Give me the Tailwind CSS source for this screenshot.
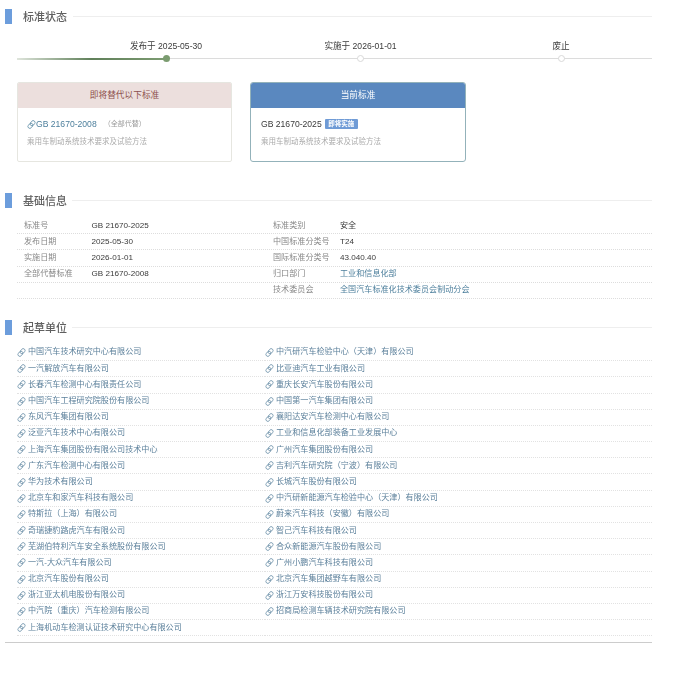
<!DOCTYPE html>
<html lang="zh">
<head>
<meta charset="utf-8">
<script src="https://cdn.jsdelivr.net/npm/@tailwindcss/browser@4"></script>
</head>
<body class="bg-white font-['Liberation_Sans','Noto_Sans_CJK_SC',sans-serif] text-[8.1px] text-[#3a3a3a]">
<svg class="hidden"><symbol id="l" viewBox="0 0 24 24" fill="none" stroke="currentColor" stroke-width="2"><g transform="rotate(-50 12 12)"><rect x="0" y="7" width="15" height="10" rx="5"/><rect x="9" y="7" width="15" height="10" rx="5"/></g></symbol></svg>
<main class="w-[647px] ml-[5px] pt-[9px] blur-[0.45px]">
  <section>
    <div class="flex items-center h-[15px]"><span class="w-[7px] h-[15px] bg-[#6c9ddc]"></span><h2 class="ml-[11px] pt-[2px] text-[11px] leading-[15px] font-medium text-[#606060]">标准状态</h2><span class="flex-1 ml-[6px] h-px bg-[#eeeeee]"></span></div>
    <div class="relative mt-[16px] ml-[12px] h-[39px] flex">
      <span class="absolute left-0 right-0 top-[18px] h-px bg-[#dcdcdc]"></span>
      <span class="absolute left-0 w-[149px] top-[18px] h-[1.5px] bg-gradient-to-r from-[#dfe5dc] via-[#60805a] to-[#7d9c72]"></span>
      <div class="relative w-[100px] ml-[99px] flex flex-col items-center"><span class="text-[8.6px] leading-[12px] whitespace-nowrap">发布于 2025-05-30</span><span class="mt-[3px] w-[7px] h-[7px] rounded-full bg-[#7b9c70]"></span></div>
      <div class="relative w-[100px] ml-[94.5px] flex flex-col items-center"><span class="text-[8.6px] leading-[12px] whitespace-nowrap">实施于 2026-01-01</span><span class="mt-[3px] w-[7px] h-[7px] rounded-full bg-white border border-[#d8d8d8]"></span></div>
      <div class="relative w-[100px] ml-[100.5px] flex flex-col items-center"><span class="text-[8.6px] leading-[12px] whitespace-nowrap">废止</span><span class="mt-[3px] w-[7px] h-[7px] rounded-full bg-white border border-[#d8d8d8]"></span></div>
    </div>
    <div class="flex ml-[12px] mt-[3px] gap-[18px]">
      <div class="w-[215px] h-[80px] rounded-[2px] border border-[#e6e6e0] overflow-hidden">
        <div class="h-[25px] bg-[#ecdfdd] text-[#8c4f4c] text-[8.7px] flex items-center justify-center">即将替代以下标准</div>
        <div class="pl-[9px] pt-[10px]">
          <div class="flex items-center h-[12px]"><svg class="w-[9px] h-[9px] text-[#5b8ba5]"><use href="#l"/></svg><span class="text-[8.6px] text-[#4d7f9c]">GB 21670-2008</span><span class="ml-[7px] text-[7px] text-[#999]">（全部代替）</span></div>
          <p class="mt-[6px] text-[7.5px] leading-[11px] text-[#aaa]">乘用车制动系统技术要求及试验方法</p>
        </div>
      </div>
      <div class="w-[216px] h-[80px] rounded-[3px] border border-[#93b2ba] overflow-hidden">
        <div class="h-[25px] bg-[#5a88bf] text-white text-[8.7px] flex items-center justify-center">当前标准</div>
        <div class="pl-[10px] pt-[10px]">
          <div class="flex items-center h-[12px]"><span class="text-[8.6px] text-[#3a3a3a]">GB 21670-2025</span><span class="ml-[3px] w-[33px] h-[10px] rounded-[1px] bg-[#6f9bd6] text-white text-[6.5px] font-bold flex items-center justify-center">即将实施</span></div>
          <p class="mt-[6px] text-[7.5px] leading-[11px] text-[#aaa]">乘用车制动系统技术要求及试验方法</p>
        </div>
      </div>
    </div>
  </section>

  <section class="mt-[31px]">
    <div class="flex items-center h-[15px]"><span class="w-[7px] h-[15px] bg-[#6c9ddc]"></span><h2 class="ml-[11px] pt-[2px] text-[11px] leading-[15px] font-medium text-[#606060]">基础信息</h2><span class="flex-1 ml-[5px] h-px bg-[#eeeeee]"></span></div>
    <div class="mt-[10px] ml-[12px]">
      <div class="h-[16.2px] flex items-center border-b border-dotted border-[#dddddd]"><span class="w-[7px]"></span><span class="w-[67.5px] text-[#888]">标准号</span><span class="w-[181.5px]">GB 21670-2025</span><span class="w-[67px] text-[#888]">标准类别</span><span>安全</span></div>
      <div class="h-[16.2px] flex items-center border-b border-dotted border-[#dddddd]"><span class="w-[7px]"></span><span class="w-[67.5px] text-[#888]">发布日期</span><span class="w-[181.5px]">2025-05-30</span><span class="w-[67px] text-[#888]">中国标准分类号</span><span>T24</span></div>
      <div class="h-[16.2px] flex items-center border-b border-dotted border-[#dddddd]"><span class="w-[7px]"></span><span class="w-[67.5px] text-[#888]">实施日期</span><span class="w-[181.5px]">2026-01-01</span><span class="w-[67px] text-[#888]">国际标准分类号</span><span>43.040.40</span></div>
      <div class="h-[16.2px] flex items-center border-b border-dotted border-[#dddddd]"><span class="w-[7px]"></span><span class="w-[67.5px] text-[#888]">全部代替标准</span><span class="w-[181.5px]">GB 21670-2008</span><span class="w-[67px] text-[#888]">归口部门</span><span class="text-[#4d7f9c]">工业和信息化部</span></div>
      <div class="h-[16.2px] flex items-center border-b border-dotted border-[#dddddd]"><span class="w-[7px]"></span><span class="w-[67.5px]"></span><span class="w-[181.5px]"></span><span class="w-[67px] text-[#888]">技术委员会</span><span class="text-[#4d7f9c]">全国汽车标准化技术委员会制动分会</span></div>
    </div>
  </section>

  <section class="mt-[21px]">
    <div class="flex items-center h-[15px]"><span class="w-[7px] h-[15px] bg-[#6c9ddc]"></span><h2 class="ml-[11px] pt-[2px] text-[11px] leading-[15px] font-medium text-[#606060]">起草单位</h2><span class="flex-1 ml-[5px] h-px bg-[#eeeeee]"></span></div>
    <ul class="mt-[10px] ml-[12px] grid grid-cols-[248px_1fr] text-[#5a7f9a]">
      <li class="h-[16.2px] flex items-center border-b border-dotted border-[#e2e2e2]"><svg class="w-[9px] h-[9px] shrink-0 text-[#6a8fa8]"><use href="#l"/></svg><span class="ml-[2px]">中国汽车技术研究中心有限公司</span></li>
      <li class="h-[16.2px] flex items-center border-b border-dotted border-[#e2e2e2]"><svg class="w-[9px] h-[9px] shrink-0 text-[#6a8fa8]"><use href="#l"/></svg><span class="ml-[2px]">中汽研汽车检验中心（天津）有限公司</span></li>
      <li class="h-[16.2px] flex items-center border-b border-dotted border-[#e2e2e2]"><svg class="w-[9px] h-[9px] shrink-0 text-[#6a8fa8]"><use href="#l"/></svg><span class="ml-[2px]">一汽解放汽车有限公司</span></li>
      <li class="h-[16.2px] flex items-center border-b border-dotted border-[#e2e2e2]"><svg class="w-[9px] h-[9px] shrink-0 text-[#6a8fa8]"><use href="#l"/></svg><span class="ml-[2px]">比亚迪汽车工业有限公司</span></li>
      <li class="h-[16.2px] flex items-center border-b border-dotted border-[#e2e2e2]"><svg class="w-[9px] h-[9px] shrink-0 text-[#6a8fa8]"><use href="#l"/></svg><span class="ml-[2px]">长春汽车检测中心有限责任公司</span></li>
      <li class="h-[16.2px] flex items-center border-b border-dotted border-[#e2e2e2]"><svg class="w-[9px] h-[9px] shrink-0 text-[#6a8fa8]"><use href="#l"/></svg><span class="ml-[2px]">重庆长安汽车股份有限公司</span></li>
      <li class="h-[16.2px] flex items-center border-b border-dotted border-[#e2e2e2]"><svg class="w-[9px] h-[9px] shrink-0 text-[#6a8fa8]"><use href="#l"/></svg><span class="ml-[2px]">中国汽车工程研究院股份有限公司</span></li>
      <li class="h-[16.2px] flex items-center border-b border-dotted border-[#e2e2e2]"><svg class="w-[9px] h-[9px] shrink-0 text-[#6a8fa8]"><use href="#l"/></svg><span class="ml-[2px]">中国第一汽车集团有限公司</span></li>
      <li class="h-[16.2px] flex items-center border-b border-dotted border-[#e2e2e2]"><svg class="w-[9px] h-[9px] shrink-0 text-[#6a8fa8]"><use href="#l"/></svg><span class="ml-[2px]">东风汽车集团有限公司</span></li>
      <li class="h-[16.2px] flex items-center border-b border-dotted border-[#e2e2e2]"><svg class="w-[9px] h-[9px] shrink-0 text-[#6a8fa8]"><use href="#l"/></svg><span class="ml-[2px]">襄阳达安汽车检测中心有限公司</span></li>
      <li class="h-[16.2px] flex items-center border-b border-dotted border-[#e2e2e2]"><svg class="w-[9px] h-[9px] shrink-0 text-[#6a8fa8]"><use href="#l"/></svg><span class="ml-[2px]">泛亚汽车技术中心有限公司</span></li>
      <li class="h-[16.2px] flex items-center border-b border-dotted border-[#e2e2e2]"><svg class="w-[9px] h-[9px] shrink-0 text-[#6a8fa8]"><use href="#l"/></svg><span class="ml-[2px]">工业和信息化部装备工业发展中心</span></li>
      <li class="h-[16.2px] flex items-center border-b border-dotted border-[#e2e2e2]"><svg class="w-[9px] h-[9px] shrink-0 text-[#6a8fa8]"><use href="#l"/></svg><span class="ml-[2px]">上海汽车集团股份有限公司技术中心</span></li>
      <li class="h-[16.2px] flex items-center border-b border-dotted border-[#e2e2e2]"><svg class="w-[9px] h-[9px] shrink-0 text-[#6a8fa8]"><use href="#l"/></svg><span class="ml-[2px]">广州汽车集团股份有限公司</span></li>
      <li class="h-[16.2px] flex items-center border-b border-dotted border-[#e2e2e2]"><svg class="w-[9px] h-[9px] shrink-0 text-[#6a8fa8]"><use href="#l"/></svg><span class="ml-[2px]">广东汽车检测中心有限公司</span></li>
      <li class="h-[16.2px] flex items-center border-b border-dotted border-[#e2e2e2]"><svg class="w-[9px] h-[9px] shrink-0 text-[#6a8fa8]"><use href="#l"/></svg><span class="ml-[2px]">吉利汽车研究院（宁波）有限公司</span></li>
      <li class="h-[16.2px] flex items-center border-b border-dotted border-[#e2e2e2]"><svg class="w-[9px] h-[9px] shrink-0 text-[#6a8fa8]"><use href="#l"/></svg><span class="ml-[2px]">华为技术有限公司</span></li>
      <li class="h-[16.2px] flex items-center border-b border-dotted border-[#e2e2e2]"><svg class="w-[9px] h-[9px] shrink-0 text-[#6a8fa8]"><use href="#l"/></svg><span class="ml-[2px]">长城汽车股份有限公司</span></li>
      <li class="h-[16.2px] flex items-center border-b border-dotted border-[#e2e2e2]"><svg class="w-[9px] h-[9px] shrink-0 text-[#6a8fa8]"><use href="#l"/></svg><span class="ml-[2px]">北京车和家汽车科技有限公司</span></li>
      <li class="h-[16.2px] flex items-center border-b border-dotted border-[#e2e2e2]"><svg class="w-[9px] h-[9px] shrink-0 text-[#6a8fa8]"><use href="#l"/></svg><span class="ml-[2px]">中汽研新能源汽车检验中心（天津）有限公司</span></li>
      <li class="h-[16.2px] flex items-center border-b border-dotted border-[#e2e2e2]"><svg class="w-[9px] h-[9px] shrink-0 text-[#6a8fa8]"><use href="#l"/></svg><span class="ml-[2px]">特斯拉（上海）有限公司</span></li>
      <li class="h-[16.2px] flex items-center border-b border-dotted border-[#e2e2e2]"><svg class="w-[9px] h-[9px] shrink-0 text-[#6a8fa8]"><use href="#l"/></svg><span class="ml-[2px]">蔚来汽车科技（安徽）有限公司</span></li>
      <li class="h-[16.2px] flex items-center border-b border-dotted border-[#e2e2e2]"><svg class="w-[9px] h-[9px] shrink-0 text-[#6a8fa8]"><use href="#l"/></svg><span class="ml-[2px]">奇瑞捷豹路虎汽车有限公司</span></li>
      <li class="h-[16.2px] flex items-center border-b border-dotted border-[#e2e2e2]"><svg class="w-[9px] h-[9px] shrink-0 text-[#6a8fa8]"><use href="#l"/></svg><span class="ml-[2px]">智己汽车科技有限公司</span></li>
      <li class="h-[16.2px] flex items-center border-b border-dotted border-[#e2e2e2]"><svg class="w-[9px] h-[9px] shrink-0 text-[#6a8fa8]"><use href="#l"/></svg><span class="ml-[2px]">芜湖伯特利汽车安全系统股份有限公司</span></li>
      <li class="h-[16.2px] flex items-center border-b border-dotted border-[#e2e2e2]"><svg class="w-[9px] h-[9px] shrink-0 text-[#6a8fa8]"><use href="#l"/></svg><span class="ml-[2px]">合众新能源汽车股份有限公司</span></li>
      <li class="h-[16.2px] flex items-center border-b border-dotted border-[#e2e2e2]"><svg class="w-[9px] h-[9px] shrink-0 text-[#6a8fa8]"><use href="#l"/></svg><span class="ml-[2px]">一汽-大众汽车有限公司</span></li>
      <li class="h-[16.2px] flex items-center border-b border-dotted border-[#e2e2e2]"><svg class="w-[9px] h-[9px] shrink-0 text-[#6a8fa8]"><use href="#l"/></svg><span class="ml-[2px]">广州小鹏汽车科技有限公司</span></li>
      <li class="h-[16.2px] flex items-center border-b border-dotted border-[#e2e2e2]"><svg class="w-[9px] h-[9px] shrink-0 text-[#6a8fa8]"><use href="#l"/></svg><span class="ml-[2px]">北京汽车股份有限公司</span></li>
      <li class="h-[16.2px] flex items-center border-b border-dotted border-[#e2e2e2]"><svg class="w-[9px] h-[9px] shrink-0 text-[#6a8fa8]"><use href="#l"/></svg><span class="ml-[2px]">北京汽车集团越野车有限公司</span></li>
      <li class="h-[16.2px] flex items-center border-b border-dotted border-[#e2e2e2]"><svg class="w-[9px] h-[9px] shrink-0 text-[#6a8fa8]"><use href="#l"/></svg><span class="ml-[2px]">浙江亚太机电股份有限公司</span></li>
      <li class="h-[16.2px] flex items-center border-b border-dotted border-[#e2e2e2]"><svg class="w-[9px] h-[9px] shrink-0 text-[#6a8fa8]"><use href="#l"/></svg><span class="ml-[2px]">浙江万安科技股份有限公司</span></li>
      <li class="h-[16.2px] flex items-center border-b border-dotted border-[#e2e2e2]"><svg class="w-[9px] h-[9px] shrink-0 text-[#6a8fa8]"><use href="#l"/></svg><span class="ml-[2px]">中汽院（重庆）汽车检测有限公司</span></li>
      <li class="h-[16.2px] flex items-center border-b border-dotted border-[#e2e2e2]"><svg class="w-[9px] h-[9px] shrink-0 text-[#6a8fa8]"><use href="#l"/></svg><span class="ml-[2px]">招商局检测车辆技术研究院有限公司</span></li>
      <li class="h-[16.2px] flex items-center border-b border-dotted border-[#e2e2e2]"><svg class="w-[9px] h-[9px] shrink-0 text-[#6a8fa8]"><use href="#l"/></svg><span class="ml-[2px]">上海机动车检测认证技术研究中心有限公司</span></li>
      <li class="h-[16.2px] border-b border-dotted border-[#e2e2e2]"></li>
    </ul>
    <div class="mt-[6px] h-px bg-[#cccccc]"></div>
  </section>
</main>
</body>
</html>
